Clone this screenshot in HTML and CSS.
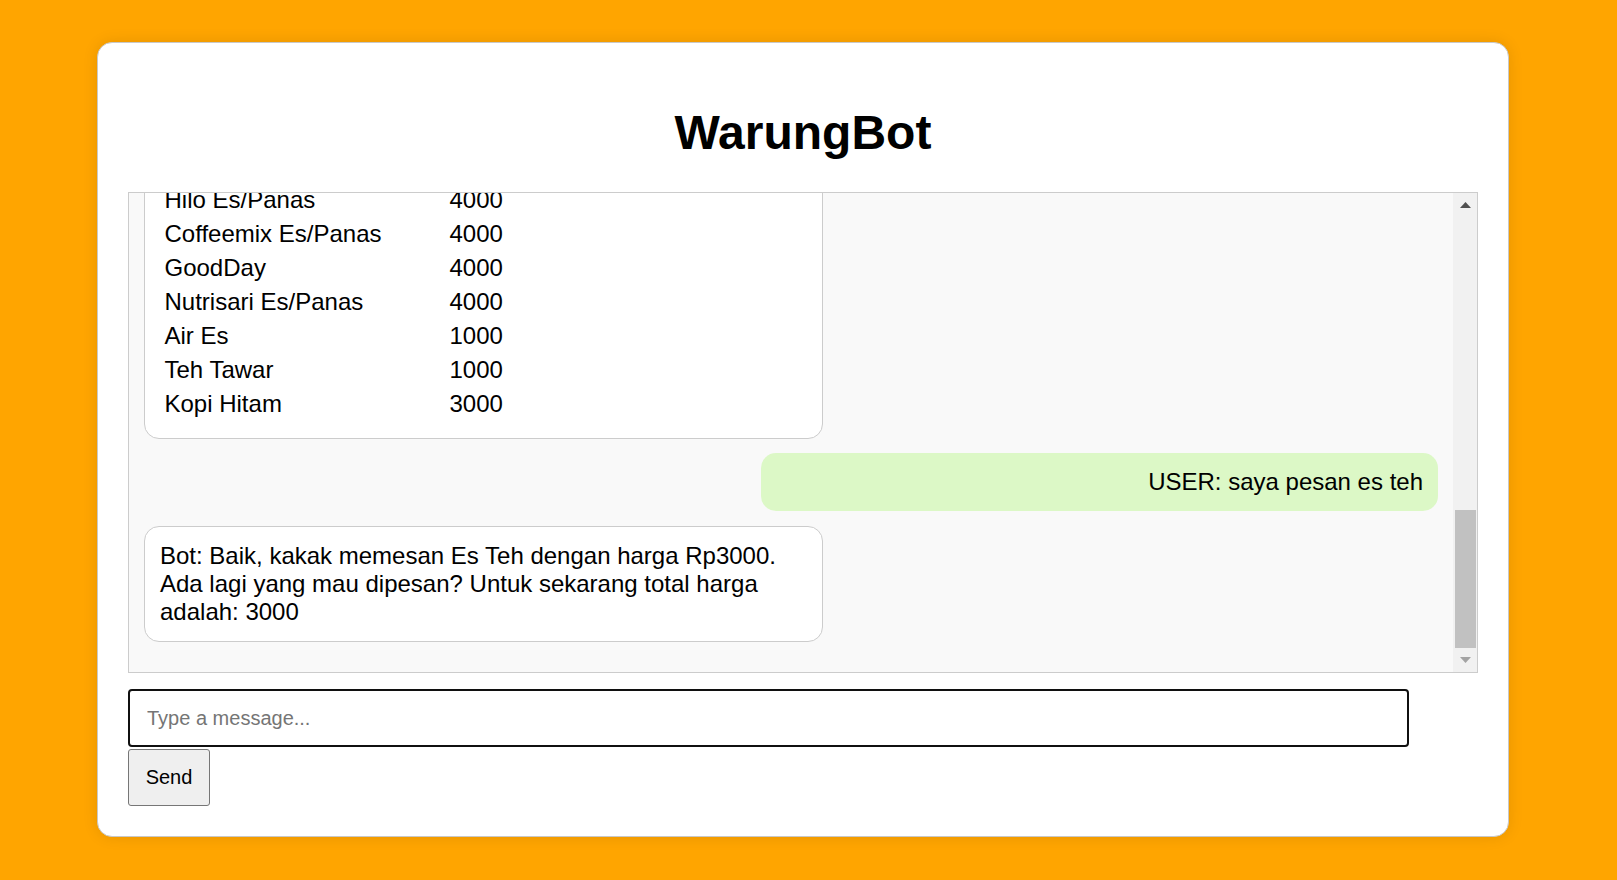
FILE: index.html
```html
<!DOCTYPE html>
<html lang="id">
<head>
<meta charset="utf-8">
<title>WarungBot</title>
<link rel="stylesheet" href="styles.css">
</head>
<body>
<div class="card">
  <h1 class="title">WarungBot</h1>
  <div class="chat">
    <div class="chat-log">
      <div class="msg bot menu-msg">
        <table class="menu">
          <tr><td class="item">Hilo Es/Panas</td><td>4000</td></tr>
          <tr><td class="item">Coffeemix Es/Panas</td><td>4000</td></tr>
          <tr><td class="item">GoodDay</td><td>4000</td></tr>
          <tr><td class="item">Nutrisari Es/Panas</td><td>4000</td></tr>
          <tr><td class="item">Air Es</td><td>1000</td></tr>
          <tr><td class="item">Teh Tawar</td><td>1000</td></tr>
          <tr><td class="item">Kopi Hitam</td><td>3000</td></tr>
        </table>
      </div>
      <div class="msg user">USER: saya pesan es teh</div>
      <div class="msg bot">Bot: Baik, kakak memesan Es Teh dengan harga Rp3000. Ada lagi yang mau dipesan? Untuk sekarang total harga adalah: 3000</div>
    </div>
    <div class="scrollbar">
      <div class="sb-btn">
        <svg width="11" height="6" viewBox="0 0 11 6"><path d="M0 6 5.5 0 11 6z" fill="#505050"/></svg>
      </div>
      <div class="sb-track">
        <div class="sb-space"></div>
        <div class="sb-thumb"></div>
      </div>
      <div class="sb-btn">
        <svg width="11" height="6" viewBox="0 0 11 6"><path d="M0 0 5.5 6 11 0z" fill="#a3a3a3"/></svg>
      </div>
    </div>
  </div>
  <input class="msg-input" type="text" placeholder="Type a message..." autofocus>
  <button class="send-btn" type="button">Send</button>
</div>
</body>
</html>
```

FILE: styles.css
```css
* {
  box-sizing: border-box;
}

html, body {
  margin: 0;
  padding: 0;
}

body {
  background: #ffa500;
  font-family: "Liberation Sans", Arial, sans-serif;
  color: #000;
  min-height: 880px;
  padding: 42px 108px 0 97px;
}

.card {
  background: #fff;
  border: 1px solid #c8c8c8;
  border-radius: 15px;
  box-shadow: 0 0 15px rgba(0, 0, 0, 0.1);
  padding: 30px;
}

.title {
  margin: 32px 0;
  font-size: 48px;
  line-height: 55px;
  font-weight: bold;
  text-align: center;
}

.chat {
  height: 481px;
  border: 1px solid #cccccc;
  background: #f9f9f9;
  display: flex;
}

.chat-log {
  flex: 1;
  min-width: 0;
  overflow: hidden;
  display: flex;
  flex-direction: column;
  justify-content: flex-end;
  padding: 0 15px 15px 15px;
}

.scrollbar {
  width: 24px;
  flex: none;
  background: #f1f1f1;
  display: flex;
  flex-direction: column;
}

.sb-btn {
  height: 24px;
  flex: none;
  display: flex;
  align-items: center;
  justify-content: center;
}

.sb-btn svg {
  display: block;
}

.sb-track {
  flex: 1;
  display: flex;
  flex-direction: column;
}

.sb-space {
  height: 293px;
  flex: none;
}

.sb-thumb {
  height: 138px;
  flex: none;
  margin: 0 1px 0 2px;
  background: #c1c1c1;
}

.msg {
  flex: none;
  width: 50%;
  box-sizing: content-box;
  padding: 15px;
  margin: 0 0 15px 0;
  border-radius: 15px;
  font-size: 24px;
  line-height: 28px;
}

.msg.bot {
  background: #fff;
  border: 1px solid #cccccc;
}

.msg.user {
  background: #dcf8c6;
  margin-left: auto;
  text-align: right;
}

.msg.menu-msg {
  padding-bottom: 16px;
  margin-bottom: 14px;
}

.menu {
  border-spacing: 3px;
  font-size: 24px;
  line-height: 28px;
}

.menu td {
  padding: 1.5px;
  vertical-align: middle;
}

.menu td.item {
  width: 282px;
}

.msg-input {
  display: block;
  width: calc(100% - 69px);
  height: 58px;
  margin: 16px 0 0 0;
  padding: 0 15px 0 17px;
  border: 2px solid #101010;
  border-radius: 4px;
  font-family: "Liberation Sans", Arial, sans-serif;
  font-size: 20px;
  color: #000;
  caret-color: #000;
  background: #fff;
}

.msg-input:focus {
  outline: none;
}

.msg-input::placeholder {
  color: #757575;
}

.send-btn {
  display: block;
  width: 82px;
  height: 57px;
  margin: 2px 0 0 0;
  padding: 0;
  border: 1px solid #767676;
  border-radius: 3px;
  background: #efefef;
  font-family: "Liberation Sans", Arial, sans-serif;
  font-size: 20px;
  color: #000;
}
```
